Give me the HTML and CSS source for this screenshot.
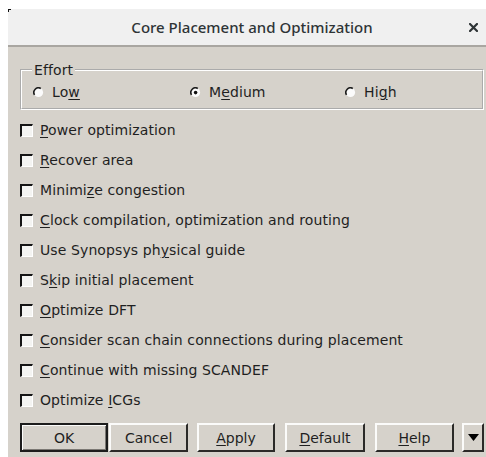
FILE: index.html
```html
<!DOCTYPE html>
<html lang="en">
<head>
<meta charset="utf-8">
<title>Core Placement and Optimization</title>
<link rel="stylesheet" href="styles.css">
</head>
<body>
<div class="window">
  <header class="titlebar">
    <span class="title">Core Placement and Optimization</span>
    <svg class="close" width="9" height="9" viewBox="0 0 9 9" aria-label="Close"><path d="M1 1 L8 8 M8 1 L1 8" stroke="#2e3436" stroke-width="2.2" stroke-linecap="square"/></svg>
  </header>

  <main class="content">
    <fieldset class="group">
      <legend>Effort</legend>
      <div class="radios">
        <label class="radio">
          <svg class="radio-mark" width="11" height="11" viewBox="0 0 11 11"><circle cx="5.5" cy="5.5" r="4.6" fill="#fbfbfb"/><path d="M7.8 1.5 A4.6 4.6 0 0 0 1.5 7.8" fill="none" stroke="#1c1c1c" stroke-width="1.6"/></svg>
          <span>Lo<u>w</u></span>
        </label>
        <label class="radio">
          <svg class="radio-mark" width="11" height="11" viewBox="0 0 11 11"><circle cx="5.5" cy="5.5" r="4.6" fill="#fbfbfb"/><path d="M7.8 1.5 A4.6 4.6 0 0 0 1.5 7.8" fill="none" stroke="#1c1c1c" stroke-width="1.6"/><circle cx="5.6" cy="5.6" r="1.8" fill="#111"/></svg>
          <span>M<u>e</u>dium</span>
        </label>
        <label class="radio">
          <svg class="radio-mark" width="11" height="11" viewBox="0 0 11 11"><circle cx="5.5" cy="5.5" r="4.6" fill="#fbfbfb"/><path d="M7.8 1.5 A4.6 4.6 0 0 0 1.5 7.8" fill="none" stroke="#1c1c1c" stroke-width="1.6"/></svg>
          <span>Hi<u>g</u>h</span>
        </label>
      </div>
    </fieldset>

    <ul class="options">
      <li class="option"><span class="check"></span><span><u>P</u>ower optimization</span></li>
      <li class="option"><span class="check"></span><span><u>R</u>ecover area</span></li>
      <li class="option"><span class="check"></span><span>Minimi<u>z</u>e congestion</span></li>
      <li class="option"><span class="check"></span><span><u>C</u>lock compilation, optimization and routing</span></li>
      <li class="option"><span class="check"></span><span>Use Synopsys ph<u>y</u>sical guide</span></li>
      <li class="option"><span class="check"></span><span>S<u>k</u>ip initial placement</span></li>
      <li class="option"><span class="check"></span><span><u>O</u>ptimize DFT</span></li>
      <li class="option"><span class="check"></span><span><u>C</u>onsider scan chain connections during placement</span></li>
      <li class="option"><span class="check"></span><span><u>C</u>ontinue with missing SCANDEF</span></li>
      <li class="option"><span class="check"></span><span>Optimize <u>I</u>CGs</span></li>
    </ul>

    <div class="buttons">
      <button class="btn btn-default">OK</button>
      <button class="btn btn-cancel">Cancel</button>
      <button class="btn"><u>A</u>pply</button>
      <button class="btn btn-wide"><u>D</u>efault</button>
      <button class="btn btn-wide"><u>H</u>elp</button>
      <button class="btn btn-menu"><svg width="11" height="7" viewBox="0 0 11 7"><path d="M0 0 H11 L5.5 7 Z" fill="#000"/></svg></button>
    </div>
  </main>
</div>
</body>
</html>
```

FILE: styles.css
```css
html, body {
  margin: 0;
  padding: 0;
  background: #ffffff;
  overflow: hidden;
}

.window {
  position: relative;
  width: 488px;
  margin: 9px 0 0 8px;
  font-family: "DejaVu Sans", sans-serif;
  font-size: 14px;
  letter-spacing: 0.1px;
  color: #1f1f1f;
}

/* small dark corner of the window frame */
.window::before {
  content: "";
  position: absolute;
  left: 0;
  top: 0;
  width: 3px;
  height: 3px;
  background: linear-gradient(135deg, #111 50%, transparent 50%);
}

.titlebar {
  height: 36px;
  background: #f0f0f0;
  border-bottom: 2px solid #a9a6a1;
  display: grid;
  grid-template-columns: 1fr auto 1fr;
  align-items: center;
}

.title {
  grid-column: 2;
  font-family: "Noto Sans", sans-serif;
  font-size: 15px;
  font-weight: 500;
  letter-spacing: 0;
  color: #2e3436;
}

.close {
  grid-column: 3;
  justify-self: end;
  margin-right: 18px;
  display: block;
}

.content {
  background: #d6d2cb;
  padding: 16px 12px 0;
  height: 394px;
}

u {
  text-decoration-thickness: 1px;
  text-underline-offset: 2px;
}

/* Effort group box */
.group {
  margin: 0;
  padding: 6px 11px 7px;
  border: 2px groove #ffffff;
  min-width: 0;
}

.group legend {
  padding: 0 2px;
  margin-left: -1px;
  line-height: 14px;
}

.radios {
  display: grid;
  grid-template-columns: 157px 155px auto;
  height: 18px;
  align-items: center;
}

.radio {
  display: flex;
  align-items: center;
  gap: 8px;
}

.radio-mark {
  display: block;
  flex: none;
}

/* check button list */
.options {
  list-style: none;
  margin: 5px 0 0;
  padding: 0;
}

.option {
  height: 30px;
  display: flex;
  align-items: center;
  gap: 7px;
}

.check {
  box-sizing: border-box;
  width: 13px;
  height: 13px;
  flex: none;
  background: #f4f4f2;
  border-top: 2px solid #151515;
  border-left: 2px solid #151515;
  border-right: 1px solid #ffffff;
  border-bottom: 1px solid #ffffff;
}

/* button row */
.buttons {
  display: flex;
  margin-top: 8px;
}

.btn {
  box-sizing: border-box;
  height: 29px;
  width: 79px;
  margin: 0 0 0 9px;
  padding: 0;
  font: inherit;
  color: #1f1f1f;
  background: #d6d2cb;
  border-style: solid;
  border-width: 2px;
  border-color: #fbfbfa #2b2a28 #2b2a28 #fbfbfa;
}

.btn-default {
  margin-left: 0;
  width: 89px;
  border: 2px solid #1c1c1c;
  box-shadow: inset 1px 1px 0 #fbfbfa, inset -1px -1px 0 #7b7873;
}

.btn-cancel {
  margin-left: 1px;
}

.btn-wide {
  width: 80px;
  margin-left: 10px;
}

.btn-menu {
  width: 22px;
  margin-left: 8px;
  display: flex;
  align-items: center;
  justify-content: center;
}
```
